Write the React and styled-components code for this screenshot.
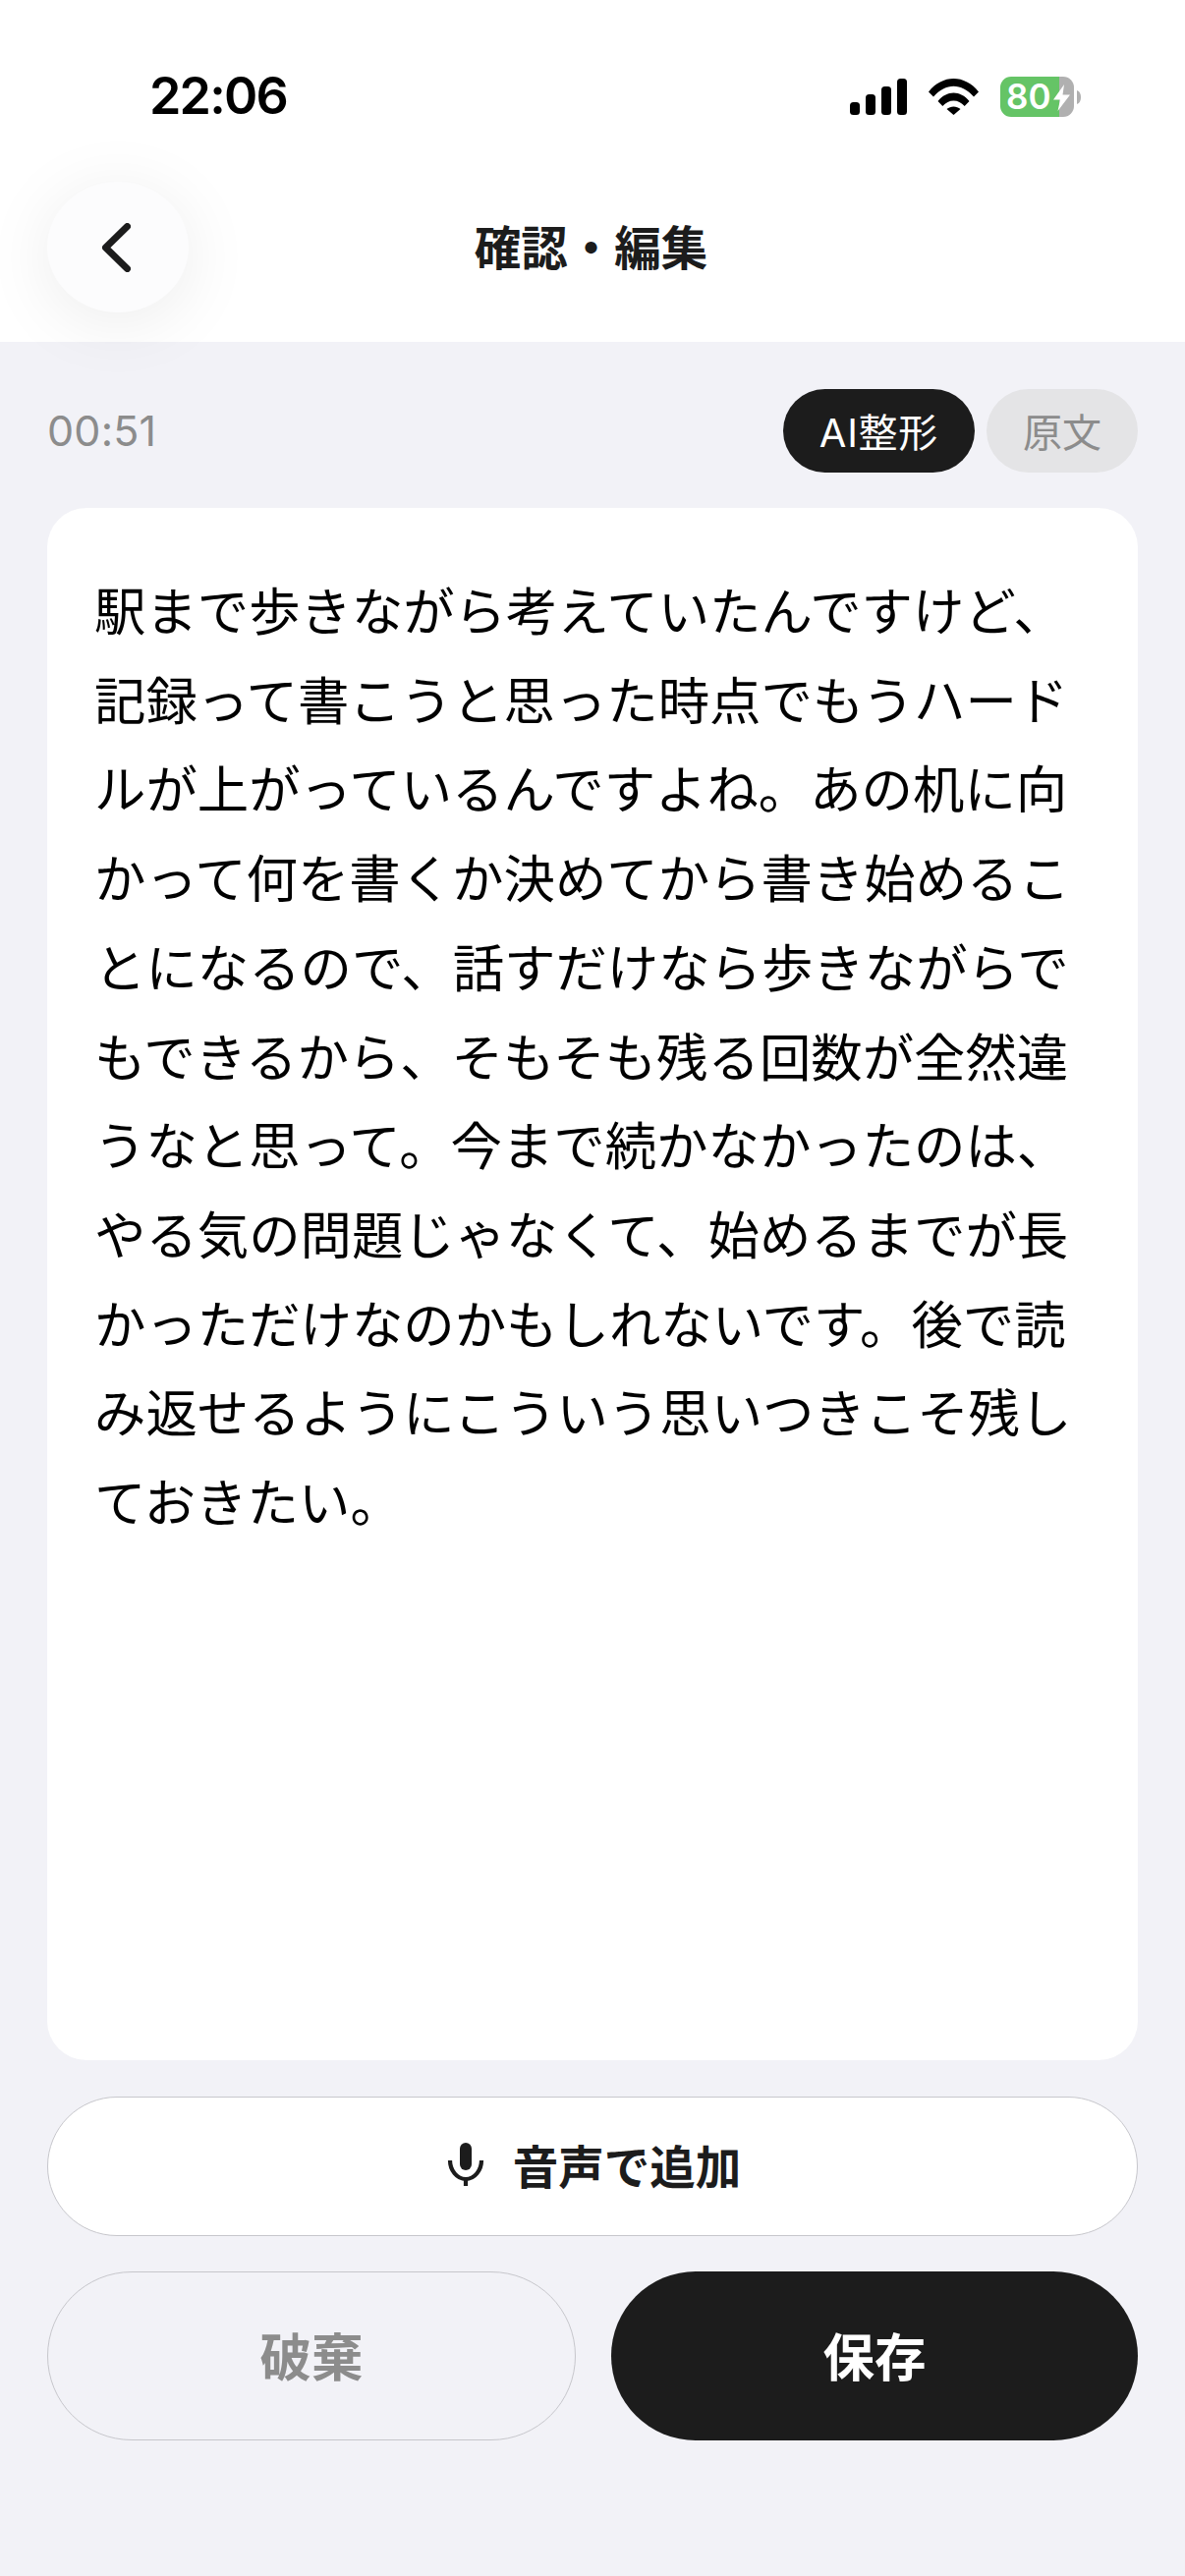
import React from "react";
import styled, { createGlobalStyle } from "styled-components";

const Global = createGlobalStyle`
  html, body { margin: 0; padding: 0; background: #f2f2f7; }
  * { box-sizing: border-box; }
`;
const FONT = `"Inter", "Noto Sans CJK JP", sans-serif`;
const GREY = "#8c8c8c";

const Page = styled.div`
  width: 1206px; height: 2622px; background: #f2f2f7; display: flex; flex-direction: column;
  font-family: ${FONT}; overflow: hidden;
`;
const Header = styled.header`
  height: 348px; background: #fff; display: flex; flex-direction: column; flex: none;
  position: relative; z-index: 1;
`;
const StatusBar = styled.div`
  height: 185px; flex: none; display: flex; align-items: flex-start; justify-content: space-between;
  padding: 67px 106px 0 152px;
`;
const Time = styled.div`
  font-size: 52px; line-height: 62px; font-weight: 600; color: #000; letter-spacing: -1.8px;
  font-family: "Inter", sans-serif;
`;
const StatusIcons = styled.div`
  display: flex; align-items: center; gap: 22px; margin-top: 11px;
`;
const Battery = styled.div`
  position: relative; width: 75px; height: 41px; border-radius: 11px;
  background: linear-gradient(90deg, #65c466 0 80%, #b0b0b0 80% 100%);
  color: #fff; font-size: 35px; font-weight: 600; line-height: 41px; padding-left: 6px; letter-spacing: 0;
`;
const BatteryWrap = styled.div`
  display: flex; align-items: center; gap: 3px;
`;
const Bolt = styled.svg`
  position: absolute; left: 54px; top: 8px;
`;
const Nav = styled.div`
  height: 133px; position: relative; display: flex; align-items: center; justify-content: center;
  padding: 2px 3px 0 0;
`;
const Title = styled.h1`
  margin: 0; font-size: 47.5px; font-weight: 700; color: #1c1c1c; line-height: 60px;
`;
const Back = styled.button`
  position: absolute; left: 48px; top: 0; width: 144px; height: 133px; border-radius: 50%;
  border: none; background: #fcfcfd; display: flex; align-items: center; justify-content: center;
  padding: 0 3px 0 0; box-shadow: 0 10px 70px rgba(0, 0, 0, 0.08);
`;
const Main = styled.main`
  flex: 1; display: flex; flex-direction: column; padding: 48px 48px 0;
`;
const Toolbar = styled.div`
  display: flex; align-items: center; justify-content: space-between; height: 85px; flex: none;
`;
const Duration = styled.span`
  font-size: 43px; color: ${GREY}; font-weight: 400; letter-spacing: 0.2px; padding-bottom: 2px;
`;
const Toggle = styled.div`
  display: flex; gap: 12px;
`;
const Chip = styled.div`
  height: 85px; padding: 0 37px 2px; border-radius: 43px; display: flex; align-items: center; justify-content: center;
  font-size: 40px; font-weight: 400; white-space: nowrap;
  letter-spacing: ${(p) => (p.$active ? "0.7px" : "0")};
  background: ${(p) => (p.$active ? "#1c1c1c" : "#e4e4e6")};
  color: ${(p) => (p.$active ? "#fff" : GREY)};
`;
const Card = styled.div`
  margin-top: 36px; height: 1580px; flex: none; background: #fff; border-radius: 40px; padding: 57px 48px 0;
`;
const Body = styled.p`
  margin: 0; font-size: 52.4px; line-height: 90.7px; color: #000; font-weight: 400; width: 1060px;
  font-family: "Noto Sans CJK JP", sans-serif;
`;
const Line = styled.span`
  display: block; white-space: nowrap;
`;
const Voice = styled.button`
  margin-top: 37px; height: 142px; width: 100%; flex: none; border-radius: 71px; background: #fff;
  border: 1.5px solid #c7c7cc; display: flex; align-items: center; justify-content: center; gap: 26px;
  font-family: ${FONT}; font-size: 46.5px; font-weight: 700; color: #1c1c1c; padding: 0 0 5px;
`;
const Actions = styled.div`
  margin-top: 36px; display: flex; gap: 36px; height: 172px; flex: none;
`;
const Action = styled.button`
  flex: 1; border-radius: 86px; font-family: ${FONT}; font-size: 52.5px; font-weight: 700; padding: 0 0 5px;
  display: flex; align-items: center; justify-content: center;
  background: ${(p) => (p.$primary ? "#1c1c1c" : "transparent")};
  color: ${(p) => (p.$primary ? "#fff" : GREY)};
  border: ${(p) => (p.$primary ? "none" : "1.5px solid #c7c7cc")};
`;

const lines = [
  "駅まで歩きながら考えていたんですけど、",
  "記録って書こうと思った時点でもうハード",
  "ルが上がっているんですよね。あの机に向",
  "かって何を書くか決めてから書き始めるこ",
  "とになるので、話すだけなら歩きながらで",
  "もできるから、そもそも残る回数が全然違",
  "うなと思って。今まで続かなかったのは、",
  "やる気の問題じゃなくて、始めるまでが長",
  "かっただけなのかもしれないです。後で読",
  "み返せるようにこういう思いつきこそ残し",
  "ておきたい。",
];

export default function App() {
  return (
    <Page>
      <Global />
      <Header>
        <StatusBar>
          <Time>22:06</Time>
          <StatusIcons>
            <svg width="58" height="37" viewBox="0 0 58 37" fill="#000">
              <rect x="0" y="24" width="10" height="13" rx="3.5" />
              <rect x="16" y="16" width="10" height="21" rx="3.5" />
              <rect x="32" y="8" width="10" height="29" rx="3.5" />
              <rect x="48" y="0" width="10" height="37" rx="3.5" />
            </svg>
            <svg width="51" height="37" viewBox="0 0 51 37" fill="#000">
              <path d="M0 13.5 C14 -4.5 37 -4.5 51 13.5 L46 18.5 C33.5 4 17.5 4 5 18.5Z" />
              <path d="M9.5 23 C18.5 11.5 32.5 11.5 41.5 23 L36.7 28 C30.5 20.5 20.5 20.5 14.3 28Z" />
              <path d="M18.5 31 C22.5 27.5 28.5 27.5 32.5 31 L25.5 37Z" />
            </svg>
            <BatteryWrap>
              <Battery>
                80
                <Bolt width="17" height="27" viewBox="0 0 17 27" fill="#fff">
                  <path d="M11 0 L0 15.5 H7 L4.5 27 L17 10.5 H9.5 Z" />
                </Bolt>
              </Battery>
              <svg width="4" height="14" viewBox="0 0 4 14" fill="#b0b0b0">
                <path d="M0 0 C3 1 4 4 4 7 C4 10 3 13 0 14Z" />
              </svg>
            </BatteryWrap>
          </StatusIcons>
        </StatusBar>
        <Nav>
          <Back aria-label="戻る">
            <svg width="29" height="50" viewBox="0 0 29 50" fill="none" stroke="#1c1c1c" strokeWidth="7" strokeLinecap="round" strokeLinejoin="round">
              <path d="M25.5 3.5 L3.5 25 L25.5 46.5" />
            </svg>
          </Back>
          <Title>確認・編集</Title>
        </Nav>
      </Header>
      <Main>
        <Toolbar>
          <Duration>00:51</Duration>
          <Toggle>
            <Chip $active>AI整形</Chip>
            <Chip>原文</Chip>
          </Toggle>
        </Toolbar>
        <Card>
          <Body>
            {lines.map((l) => (
              <Line key={l}>{l}</Line>
            ))}
          </Body>
        </Card>
        <Voice>
          <svg width="44" height="44" viewBox="0 0 44 44" fill="none">
            <rect x="16" y="0" width="12" height="28" rx="6" fill="#1c1c1c" />
            <path d="M6 18 C6 28 13 37 22 37 C31 37 38 28 38 18" stroke="#1c1c1c" strokeWidth="4.2" />
            <path d="M22 37 V44" stroke="#1c1c1c" strokeWidth="4.2" />
          </svg>
          音声で追加
        </Voice>
        <Actions>
          <Action>破棄</Action>
          <Action $primary>保存</Action>
        </Actions>
      </Main>
    </Page>
  );
}
